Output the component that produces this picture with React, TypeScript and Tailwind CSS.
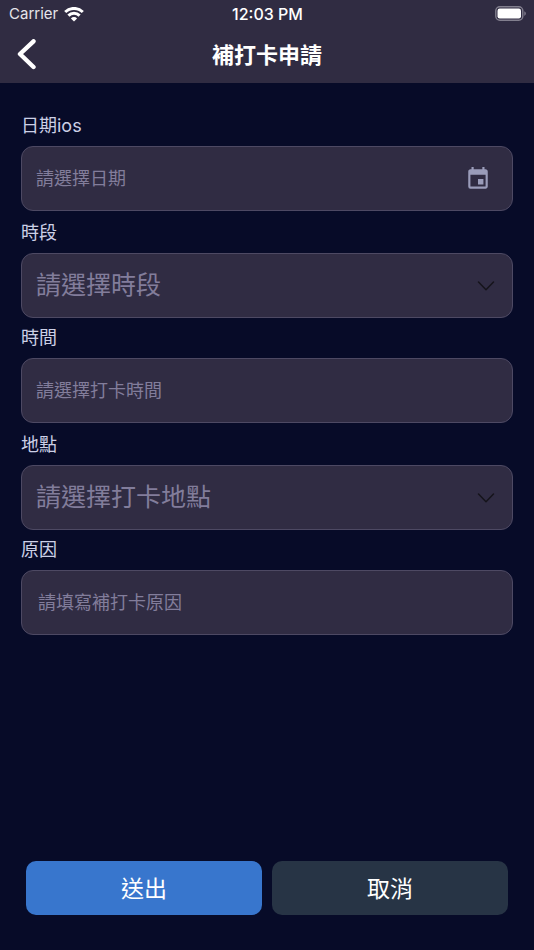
import React, { useState } from 'react';
import { MdEvent } from 'react-icons/md';

const placeholderFont = 'text-[18px] placeholder:text-[#827d9b] placeholder:opacity-100';
const boxStyle =
  'block w-full h-[65px] rounded-xl border border-[#4d4963] bg-[#302c43] text-[#ccd0e6] outline-none focus:border-[#3876cd]';

interface FieldProps {
  id: string;
  label: string;
  children: React.ReactNode;
}

const Field: React.FC<FieldProps> = ({ id, label, children }) => (
  <div>
    <label htmlFor={id} className="block mb-1.5 text-[18px] leading-7 text-[#ccd0e6]">
      {label}
    </label>
    <div className="relative">{children}</div>
  </div>
);

interface SelectBoxProps {
  id: string;
  placeholder: string;
  options: string[];
}

const SelectBox: React.FC<SelectBoxProps> = ({ id, placeholder, options }) => {
  const [value, setValue] = useState('');

  return (
    <>
      <select
        id={id}
        value={value}
        onChange={(e) => setValue(e.target.value)}
        className={`${boxStyle} appearance-none pl-[14px] pr-12 text-[25px] ${value ? '' : 'text-[#827d9b]!'}`}
      >
        <option value="" disabled>{placeholder}</option>
        {options.map((option) => (
          <option key={option} value={option}>{option}</option>
        ))}
      </select>
      <svg
        className="absolute right-[18px] inset-y-0 my-auto pointer-events-none"
        width="18"
        height="12"
        viewBox="0 0 18 12"
        fill="none"
        stroke="#15141b"
        strokeWidth="1.5"
        strokeLinecap="round"
        strokeLinejoin="round"
      >
        <path d="M1.5 2 9 9.8 16.5 2" />
      </svg>
    </>
  );
};

const StatusBar: React.FC = () => (
  <div className="grid grid-cols-3 items-center h-7 pl-[9px] pr-2 text-white">
    <div className="flex items-center gap-1.5">
      <span className="text-[15px] text-[#e6e5ea]">Carrier</span>
      <svg width="20" height="15" viewBox="0 0 20 15" fill="none" stroke="#fff" strokeWidth="3">
        <path d="M1.2 5a12.6 12.6 0 0 1 17.6 0" />
        <path d="M4.4 8.6a7.9 7.9 0 0 1 11.2 0" />
        <path d="M10 14.4 6.9 11.4a4.4 4.4 0 0 1 6.2 0z" fill="#fff" stroke="none" />
      </svg>
    </div>
    <span className="text-center text-[16px] font-medium">12:03 PM</span>
    <svg className="justify-self-end" width="31" height="16" viewBox="0 0 31 16">
      <rect x="0.8" y="0.8" width="27" height="13.4" rx="4" fill="none" stroke="#827f8e" strokeWidth="1.4" />
      <rect x="2.5" y="2.5" width="23.5" height="10" rx="2.2" fill="#fff" />
      <path d="M29.3 5.2c2 .8 2 3.8 0 4.6z" fill="#827f8e" />
    </svg>
  </div>
);

export default function App() {
  return (
    <div className="min-h-screen flex flex-col bg-[#070b28] font-['Inter','Noto_Sans_CJK_TC',sans-serif]">
      <header className="bg-[#302c42]">
        <StatusBar />
        <div className="grid grid-cols-[1fr_auto_1fr] items-center h-[55px] px-4 pb-0.5 text-white">
          <button type="button" aria-label="返回" className="justify-self-start">
            <svg
              width="22"
              height="32"
              viewBox="0 0 22 32"
              fill="none"
              stroke="currentColor"
              strokeWidth="4.4"
              strokeLinecap="round"
              strokeLinejoin="round"
            >
              <path d="M17.5 1.9 4 14.6 17.5 27.6" transform="translate(0 .4)" />
            </svg>
          </button>
          <h1 className="text-[22px] leading-8 font-bold">補打卡申請</h1>
        </div>
      </header>

      <form className="flex-1 flex flex-col" onSubmit={(e) => e.preventDefault()}>
        <div className="flex flex-col px-[21px] pt-[29px]">
          <Field id="date" label="日期ios">
            <input
              id="date"
              type="text"
              placeholder="請選擇日期"
              className={`${boxStyle} ${placeholderFont} pl-[14px] pr-14`}
            />
            <MdEvent size={26} className="absolute right-[22px] inset-y-0 my-auto pointer-events-none text-[#9a9cba]" />
          </Field>

          <div className="mt-2">
            <Field id="period" label="時段">
              <SelectBox id="period" placeholder="請選擇時段" options={['上班', '下班']} />
            </Field>
          </div>

          <div className="mt-1.5">
            <Field id="time" label="時間">
              <input
                id="time"
                type="text"
                placeholder="請選擇打卡時間"
                className={`${boxStyle} ${placeholderFont} px-[14px]`}
              />
            </Field>
          </div>

          <div className="mt-2">
            <Field id="place" label="地點">
              <SelectBox id="place" placeholder="請選擇打卡地點" options={['公司', '外勤']} />
            </Field>
          </div>

          <div className="mt-1.5">
            <Field id="reason" label="原因">
              <input
                id="reason"
                type="text"
                placeholder="請填寫補打卡原因"
                className={`${boxStyle} ${placeholderFont} px-4`}
              />
            </Field>
          </div>
        </div>

        <div className="mt-auto grid grid-cols-2 gap-2.5 px-[26px] pt-8 pb-[35px] text-[23px] text-white">
          <button type="submit" className="h-[54px] pt-0.5 rounded-[10px] bg-[#3876cd]">送出</button>
          <button type="button" className="h-[54px] pt-0.5 rounded-[10px] bg-[#273445]">取消</button>
        </div>
      </form>
    </div>
  );
}
